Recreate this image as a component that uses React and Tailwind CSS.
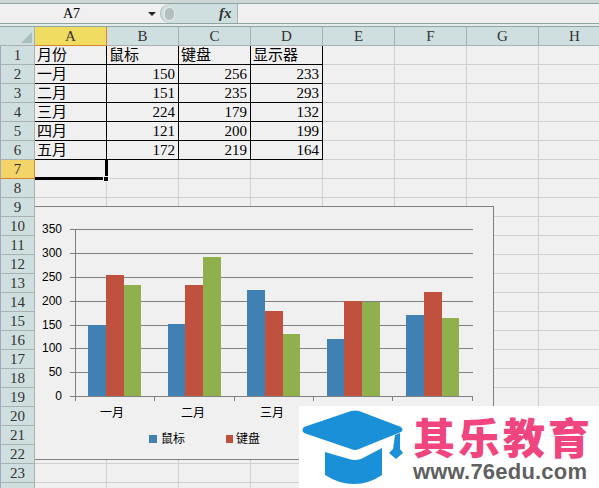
import React from 'react';

const cols = ['A', 'B', 'C', 'D', 'E', 'F', 'G', 'H'];
const rowNums = Array.from({ length: 24 }, (_, i) => i + 1);
const table = [
  ['月份', '鼠标', '键盘', '显示器'],
  ['一月', 150, 256, 233],
  ['二月', 151, 235, 293],
  ['三月', 224, 179, 132],
  ['四月', 121, 200, 199],
  ['五月', 172, 219, 164],
];

const gridY = [228, 252, 276, 300, 324, 347, 371, 395];
const yLabels = [350, 300, 250, 200, 150, 100, 50, 0];
const ticksX = [75, 154, 234, 313, 392, 472];
const bars = [
  { x: [88, 106, 124, 141], top: [324, 274, 284] },
  { x: [168, 185, 203, 221], top: [323, 284, 256] },
  { x: [247, 265, 283, 300], top: [289, 310, 333] },
  { x: [327, 344, 362, 380], top: [338, 300, 301] },
  { x: [406, 424, 442, 459], top: [314, 291, 317] },
];
const barColors = ['#4180b2', '#c0513f', '#90b04e'];
const months = [['一月', 112], ['二月', 193], ['三月', 272]];

function Chart() {
  return (
    <svg width="459" height="254" viewBox="35 206 459 254" className="block">
      {gridY.map((y) => (
        <line key={y} x1="70" x2="473" y1={y + 0.5} y2={y + 0.5} stroke="#808080" />
      ))}
      <line x1="75.5" x2="75.5" y1="228" y2="400" stroke="#808080" />
      {ticksX.map((x) => (
        <line key={x} x1={x + 0.5} x2={x + 0.5} y1="395" y2="400" stroke="#808080" />
      ))}
      {bars.map((g) =>
        g.top.map((t, i) => (
          <rect key={g.x[i]} x={g.x[i]} y={t} width={g.x[i + 1] - g.x[i]} height={395 - t} fill={barColors[i]} />
        ))
      )}
      {yLabels.map((v, i) => (
        <text key={v} x="62" y={gridY[i] + 4} textAnchor="end" fontSize="12" fill="#000" fontFamily="'Liberation Sans', sans-serif">
          {v}
        </text>
      ))}
      {months.map(([m, x]) => (
        <text key={m} x={x} y="416" textAnchor="middle" fontSize="12" fill="#000" fontFamily="'Noto Sans CJK SC', sans-serif">
          {m}
        </text>
      ))}
      <rect x="149" y="434" width="8" height="8" fill="#4180b2" />
      <text x="161" y="442" fontSize="12" fill="#000" fontFamily="'Noto Sans CJK SC', sans-serif">鼠标</text>
      <rect x="226" y="434" width="7" height="8" fill="#c0513f" />
      <text x="236" y="442" fontSize="12" fill="#000" fontFamily="'Noto Sans CJK SC', sans-serif">键盘</text>
    </svg>
  );
}

function CapIcon() {
  return (
    <svg width="108" height="82" viewBox="0 0 108 82" className="block shrink-0">
      <path d="M5 21 L52 5 Q56 4 60 5 L102 21 Q105 24 102 26 L60 43 Q56 45 52 43 L5 27 Q2 24 5 21 Z" fill="#1a90d9" />
      <path d="M26 46 L50 53 Q56 55 62 53 L83 42 V69 Q70 78 55 78 Q40 78 26 69 Z" fill="#1a90d9" />
      <path d="M96 29 L101 27 V43 L104 47 L97 53 L90 47 L94 43 Z" fill="#1a90d9" />
    </svg>
  );
}

function Logo() {
  return (
    <div className="absolute left-[299px] top-[406px] w-[300px] h-[82px] bg-white flex">
      <CapIcon />
      <div className="ml-[6px] pt-[8px] flex flex-col">
        <div className="h-[44px] text-[42px] leading-[44px] tracking-[3px] font-black text-[#f0457f] font-['Noto_Sans_CJK_SC',sans-serif] whitespace-nowrap">
          其乐教育
        </div>
        <div className="mt-[2px] text-[22px] leading-[24px] tracking-[0.2px] font-bold text-[#606060] font-['Liberation_Sans',sans-serif] whitespace-nowrap">
          www.76edu.com
        </div>
      </div>
    </div>
  );
}

function FormulaBar() {
  return (
    <div className="h-[27px] bg-[#e4ecec] flex flex-col">
      <div className="h-[4px] bg-[#ccd6d4] border-b border-[#8fa5a2]" />
      <div className="h-[19px] bg-[#f0f0f0] flex items-center">
        <div className="w-[160px] flex items-center">
          <div className="w-[143px] text-center text-[14px] text-black font-['Liberation_Serif',serif]">A7</div>
          <div className="ml-[5px] w-0 h-0 border-x-[4px] border-x-transparent border-t-[4px] border-t-[#222]" />
        </div>
        <div className="w-[78px] h-[19px] bg-[#cfdfdf] rounded-l-full flex items-center border-l border-[#a9b5b5] border-r">
          <div className="ml-[3px] w-[11px] h-[14px] rounded-full bg-[#b5bebe] border border-[#e8eeee]" />
          <div className="ml-[44px] text-[15px] font-bold italic text-[#333] font-['Liberation_Serif',serif]">fx</div>
        </div>
      </div>
      <div className="h-[4px] bg-[#e4ecec] border-t border-b border-[#8fa5a2]" />
    </div>
  );
}

export default function App() {
  return (
    <div className="relative w-[599px] h-[488px] overflow-hidden bg-[#f0f0f0] font-['Liberation_Serif','Noto_Sans_CJK_SC',serif]">
      <FormulaBar />

      <div className="flex h-[19px]">
        <div className="w-[35px] shrink-0 bg-[#cfdfdf] border-r border-b border-[#a9b1b1] flex items-end justify-end p-[2px]">
          <div className="w-0 h-0 border-l-[11px] border-l-transparent border-b-[11px] border-b-[#a8c0c0]" />
        </div>
        {cols.map((c) => (
          <div
            key={c}
            className={
              c === 'A'
                ? 'w-[72px] shrink-0 text-center text-[15px] leading-[18px] text-[#333] bg-[#f1dc62] border-r border-b border-[#d9842c]'
                : 'w-[72px] shrink-0 text-center text-[15px] leading-[18px] text-[#333] bg-[#cfdfdf] border-r border-b border-[#a9b1b1]'
            }
          >
            {c}
          </div>
        ))}
      </div>

      {rowNums.map((n) => {
        const row = table[n - 1];
        return (
          <div key={n} className="flex h-[19px]">
            <div
              className={
                n === 7
                  ? 'w-[35px] shrink-0 text-center text-[15px] leading-[18px] text-[#333] bg-[#f3d469] border-l border-l-[#a5a9c0] border-r border-b border-[#d9842c]'
                  : 'w-[35px] shrink-0 text-center text-[15px] leading-[18px] text-[#333] bg-[#cfdfdf] border-l border-l-[#a5a9c0] border-r border-b border-[#a9b1b1]'
              }
            >
              {n < 24 ? n : null}
            </div>
            {cols.map((c, i) => {
              const val = row && i < 4 ? row[i] : null;
              if (row && i < 4) {
                return (
                  <div
                    key={c}
                    className={
                      typeof val === 'number'
                        ? 'w-[72px] shrink-0 px-[3px] text-right text-[15px] leading-[18px] text-black border-r border-b border-black'
                        : 'w-[72px] shrink-0 px-[2px] text-left text-[15px] leading-[18px] text-black border-r border-b border-black whitespace-nowrap'
                    }
                  >
                    {val}
                  </div>
                );
              }
              if (n === 7 && i === 0) {
                return (
                  <div key={c} className="relative w-[72px] shrink-0">
                    <div className="absolute left-0 top-0 -right-px -bottom-px border-r-[3px] border-b-[3px] border-black" />
                    <div className="absolute -right-[2px] -bottom-[3px] w-[6px] h-[6px] bg-black border border-[#f0f0f0]" />
                  </div>
                );
              }
              return <div key={c} className="w-[72px] shrink-0 border-r border-b border-[#d0d0d0]" />;
            })}
          </div>
        );
      })}

      <div className="absolute left-[35px] top-[206px] w-[459px] h-[254px] bg-[#f0f0f0] border-t border-r border-b border-[#808080] overflow-hidden">
        <Chart />
      </div>

      <Logo />
    </div>
  );
}
